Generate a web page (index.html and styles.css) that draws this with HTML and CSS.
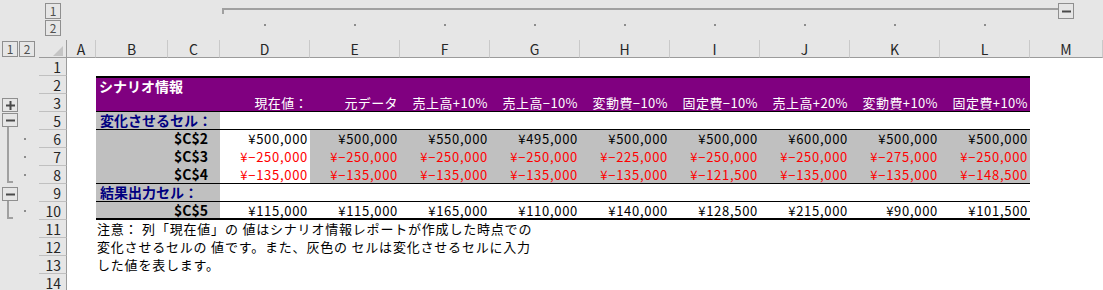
FILE: index.html
```html
<!DOCTYPE html>
<html lang="ja">
<head>
    <meta charset="UTF-8">
    <title>シナリオ情報</title>
    <link rel="stylesheet" href="styles.css">
</head>
<body>
<div class="window">
    <!-- 列のアウトライン -->
    <div class="outline-top">
        <div class="levels levels-col">
            <span class="lvl">1</span>
            <span class="lvl">2</span>
        </div>
        <div></div>
        <div class="col-group">
            <div class="bracket-row">
                <div class="bracket-line"></div>
                <span class="obtn"><svg width="9" height="9"><path d="M0 4.5h9" stroke="#4a4a4a" stroke-width="2"/></svg></span>
            </div>
            <div class="dots">
                <i class="dot"></i><i class="dot"></i><i class="dot"></i>
                <i class="dot"></i><i class="dot"></i><i class="dot"></i>
                <i class="dot"></i><i class="dot"></i><i class="dot"></i>
            </div>
        </div>
    </div>

    <div class="sheet">
        <!-- 列見出し -->
        <div class="gutter levels levels-row">
            <span class="lvl">1</span>
            <span class="lvl">2</span>
        </div>
        <div class="corner"><i class="tri"></i></div>
        <div class="ch">A</div>
        <div class="ch">B</div>
        <div class="ch">C</div>
        <div class="ch">D</div>
        <div class="ch">E</div>
        <div class="ch">F</div>
        <div class="ch">G</div>
        <div class="ch">H</div>
        <div class="ch">I</div>
        <div class="ch">J</div>
        <div class="ch">K</div>
        <div class="ch">L</div>
        <div class="ch">M</div>

        <!-- 1 -->
        <div class="gutter"></div>
        <div class="rh">1</div>

        <!-- 2 -->
        <div class="gutter"></div>
        <div class="rh">2</div>
        <div class="b-l purple title">シナリオ情報</div>

        <!-- 3 -->
        <div class="gutter group-head plus-row">
            <span class="obtn"><svg width="9" height="9"><path d="M0 4.5h9M4.5 0v9" stroke="#4a4a4a" stroke-width="2"/></svg></span>
        </div>
        <div class="rh">3</div>
        <div class="b-c purple line-b"></div>
        <div class="hd">現在値：</div>
        <div class="hd">元データ</div>
        <div class="hd">売上高+10%</div>
        <div class="hd">売上高−10%</div>
        <div class="hd">変動費−10%</div>
        <div class="hd">固定費−10%</div>
        <div class="hd">売上高+20%</div>
        <div class="hd">変動費+10%</div>
        <div class="hd">固定費+10%</div>

        <!-- 5 -->
        <div class="gutter group-head">
            <span class="obtn"><svg width="9" height="9"><path d="M0 4.5h9" stroke="#4a4a4a" stroke-width="2"/></svg></span>
            <i class="stem"></i>
        </div>
        <div class="rh">5</div>
        <div class="b-c label line-b">変化させるセル：</div>
        <div class="d-l line-b"></div>

        <!-- 6 -->
        <div class="gutter member"><i class="stem"></i><i class="dot"></i></div>
        <div class="rh">6</div>
        <div class="b-c ref">$C$2</div>
        <div class="num">¥500,000</div>
        <div class="num gray">¥500,000</div>
        <div class="num gray">¥550,000</div>
        <div class="num gray">¥495,000</div>
        <div class="num gray">¥500,000</div>
        <div class="num gray">¥500,000</div>
        <div class="num gray">¥600,000</div>
        <div class="num gray">¥500,000</div>
        <div class="num gray">¥500,000</div>

        <!-- 7 -->
        <div class="gutter member"><i class="stem"></i><i class="dot"></i></div>
        <div class="rh">7</div>
        <div class="b-c ref">$C$3</div>
        <div class="num neg">¥−250,000</div>
        <div class="num neg gray">¥−250,000</div>
        <div class="num neg gray">¥−250,000</div>
        <div class="num neg gray">¥−250,000</div>
        <div class="num neg gray">¥−225,000</div>
        <div class="num neg gray">¥−250,000</div>
        <div class="num neg gray">¥−250,000</div>
        <div class="num neg gray">¥−275,000</div>
        <div class="num neg gray">¥−250,000</div>

        <!-- 8 -->
        <div class="gutter member"><i class="stem end"></i><i class="dot"></i></div>
        <div class="rh">8</div>
        <div class="b-c ref line-b">$C$4</div>
        <div class="num neg line-b">¥−135,000</div>
        <div class="num neg gray line-b">¥−135,000</div>
        <div class="num neg gray line-b">¥−135,000</div>
        <div class="num neg gray line-b">¥−135,000</div>
        <div class="num neg gray line-b">¥−135,000</div>
        <div class="num neg gray line-b">¥−121,500</div>
        <div class="num neg gray line-b">¥−135,000</div>
        <div class="num neg gray line-b">¥−135,000</div>
        <div class="num neg gray line-b">¥−148,500</div>

        <!-- 9 -->
        <div class="gutter group-head result-row">
            <span class="obtn"><svg width="9" height="9"><path d="M0 4.5h9" stroke="#4a4a4a" stroke-width="2"/></svg></span>
            <i class="stem"></i>
        </div>
        <div class="rh">9</div>
        <div class="b-c label line-b">結果出力セル：</div>
        <div class="d-l line-b"></div>

        <!-- 10 -->
        <div class="gutter member"><i class="stem end"></i><i class="dot"></i></div>
        <div class="rh">10</div>
        <div class="b-c ref line-b2">$C$5</div>
        <div class="num line-b2">¥115,000</div>
        <div class="num line-b2">¥115,000</div>
        <div class="num line-b2">¥165,000</div>
        <div class="num line-b2">¥110,000</div>
        <div class="num line-b2">¥140,000</div>
        <div class="num line-b2">¥128,500</div>
        <div class="num line-b2">¥215,000</div>
        <div class="num line-b2">¥90,000</div>
        <div class="num line-b2">¥101,500</div>

        <!-- 11 - 14 -->
        <div class="gutter"></div>
        <div class="rh">11</div>
        <div class="note">注意： 列「現在値」の 値はシナリオ情報レポートが作成した時点での</div>

        <div class="gutter"></div>
        <div class="rh">12</div>
        <div class="note">変化させるセルの 値です。また、灰色の セルは変化させるセルに入力</div>

        <div class="gutter"></div>
        <div class="rh">13</div>
        <div class="note">した値を表します。</div>

        <div class="gutter"></div>
        <div class="rh">14</div>
    </div>
</div>
</body>
</html>
```

FILE: styles.css
```css
* {
    box-sizing: border-box;
    margin: 0;
    padding: 0;
}

body {
    background: #fff;
    font-family: "Noto Sans CJK JP", "Noto Sans", sans-serif;
    font-size: 13px;
    color: #000;
}

.window {
    width: 1103px;
    height: 290px;
    overflow: hidden;
    background: #e6e6e6;
}

/* アウトライン (上) */
.outline-top {
    display: grid;
    grid-template-columns: 67px 153px 1fr;
    height: 40px;
}

.levels {
    display: flex;
    gap: 1px;
}

.levels-col {
    flex-direction: column;
    padding: 3px 0 0 45px;
}

.levels-row {
    padding: 1px 0 0 2px;
}

.lvl {
    width: 16px;
    height: 16px;
    border: 1px solid #8f8f8f;
    display: flex;
    align-items: center;
    justify-content: center;
    font-size: 12px;
    line-height: 1;
    color: #505050;
}

.col-group {
    display: flex;
    flex-direction: column;
}

.bracket-row {
    display: flex;
    height: 20px;
    padding: 3px 29px 0 2px;
}

.bracket-line {
    flex: 1;
    height: 6px;
    margin-top: 5px;
    border-top: 2px solid #a0a0a0;
    border-left: 2px solid #a0a0a0;
}

.obtn {
    width: 16px;
    height: 16px;
    border: 1px solid #8f8f8f;
    display: flex;
    align-items: center;
    justify-content: center;
    flex-shrink: 0;
}

.dots {
    display: grid;
    grid-template-columns: repeat(9, 90px);
    justify-items: center;
    padding-top: 4px;
}

.dot {
    display: block;
    width: 2px;
    height: 2px;
    background: #8c8c8c;
}

/* シート */
.sheet {
    display: grid;
    grid-template-columns: 39px 28px 29px 72px 52px repeat(9, 90px) 1fr;
    grid-auto-rows: 18px;
    background: #fff;
}

.gutter {
    grid-column: 1;
    background: #e6e6e6;
    display: flex;
}

.group-head {
    flex-direction: column;
    padding: 1px 0 0 2px;
}

.group-head .obtn {
    height: 14px;
}

.plus-row {
    padding-top: 4px;
}

.result-row {
    padding-top: 3px;
}

.group-head .stem {
    flex: 1;
    margin-left: 5px;
    border-left: 2px solid #a0a0a0;
}

.member {
    align-items: center;
}

.member .stem {
    align-self: stretch;
    width: 6px;
    margin-left: 7px;
    border-left: 2px solid #a0a0a0;
}

.member .stem.end {
    margin-bottom: 1px;
    border-bottom: 2px solid #a0a0a0;
}

.member .dot {
    margin-left: 11px;
}

.corner {
    background: #e6e6e6;
    border-right: 1px solid #9b9b9b;
    border-bottom: 1px solid #9b9b9b;
    display: flex;
    justify-content: flex-end;
    align-items: flex-end;
    padding: 0 3px 1px 0;
}

.tri {
    display: block;
    width: 10px;
    height: 10px;
    background: #c4c4c4;
    clip-path: polygon(100% 0, 100% 100%, 0 100%);
}

.ch {
    background: #e6e6e6;
    border-right: 1px solid #c9c9c9;
    border-bottom: 1px solid #9b9b9b;
    text-align: center;
    font-size: 14px;
    line-height: 18px;
    color: #262626;
}

.rh {
    background: #e6e6e6;
    border-right: 1px solid #9b9b9b;
    border-bottom: 1px solid #c0c0c0;
    text-align: right;
    padding-right: 5px;
    font-size: 14px;
    line-height: 18px;
    color: #262626;
}

/* セル */
.b-l { grid-column: 4 / 15; }
.b-c { grid-column: 4 / 6; }
.d-l { grid-column: 6 / 15; }
.note { grid-column: 4 / 15; }

.b-l, .b-c, .d-l, .note, .hd, .num {
    white-space: nowrap;
    line-height: 17px;
}

.purple {
    background: #800080;
    color: #fff;
}

.title {
    border-top: 2px solid #000;
    font-weight: 700;
    font-size: 14px;
    line-height: 16px;
    padding-left: 3px;
}

.hd {
    background: #800080;
    color: #fff;
    text-align: right;
    padding-right: 2px;
    letter-spacing: 0.4px;
    border-bottom: 1px solid #000;
}

.label {
    background: #c0c0c0;
    color: #000080;
    font-weight: 700;
    font-size: 14px;
    padding-left: 4px;
}

.ref {
    background: #c0c0c0;
    font-weight: 700;
    font-size: 14px;
    text-align: right;
    padding-right: 12px;
}

.num {
    text-align: right;
    padding-right: 2px;
    letter-spacing: 0.7px;
}

.neg {
    color: #f00;
}

.gray {
    background: #c0c0c0;
}

.line-b {
    border-bottom: 1px solid #000;
}

.line-b2 {
    border-bottom: 2px solid #000;
}

.note {
    padding-left: 1px;
    letter-spacing: 0.8px;
}
```
